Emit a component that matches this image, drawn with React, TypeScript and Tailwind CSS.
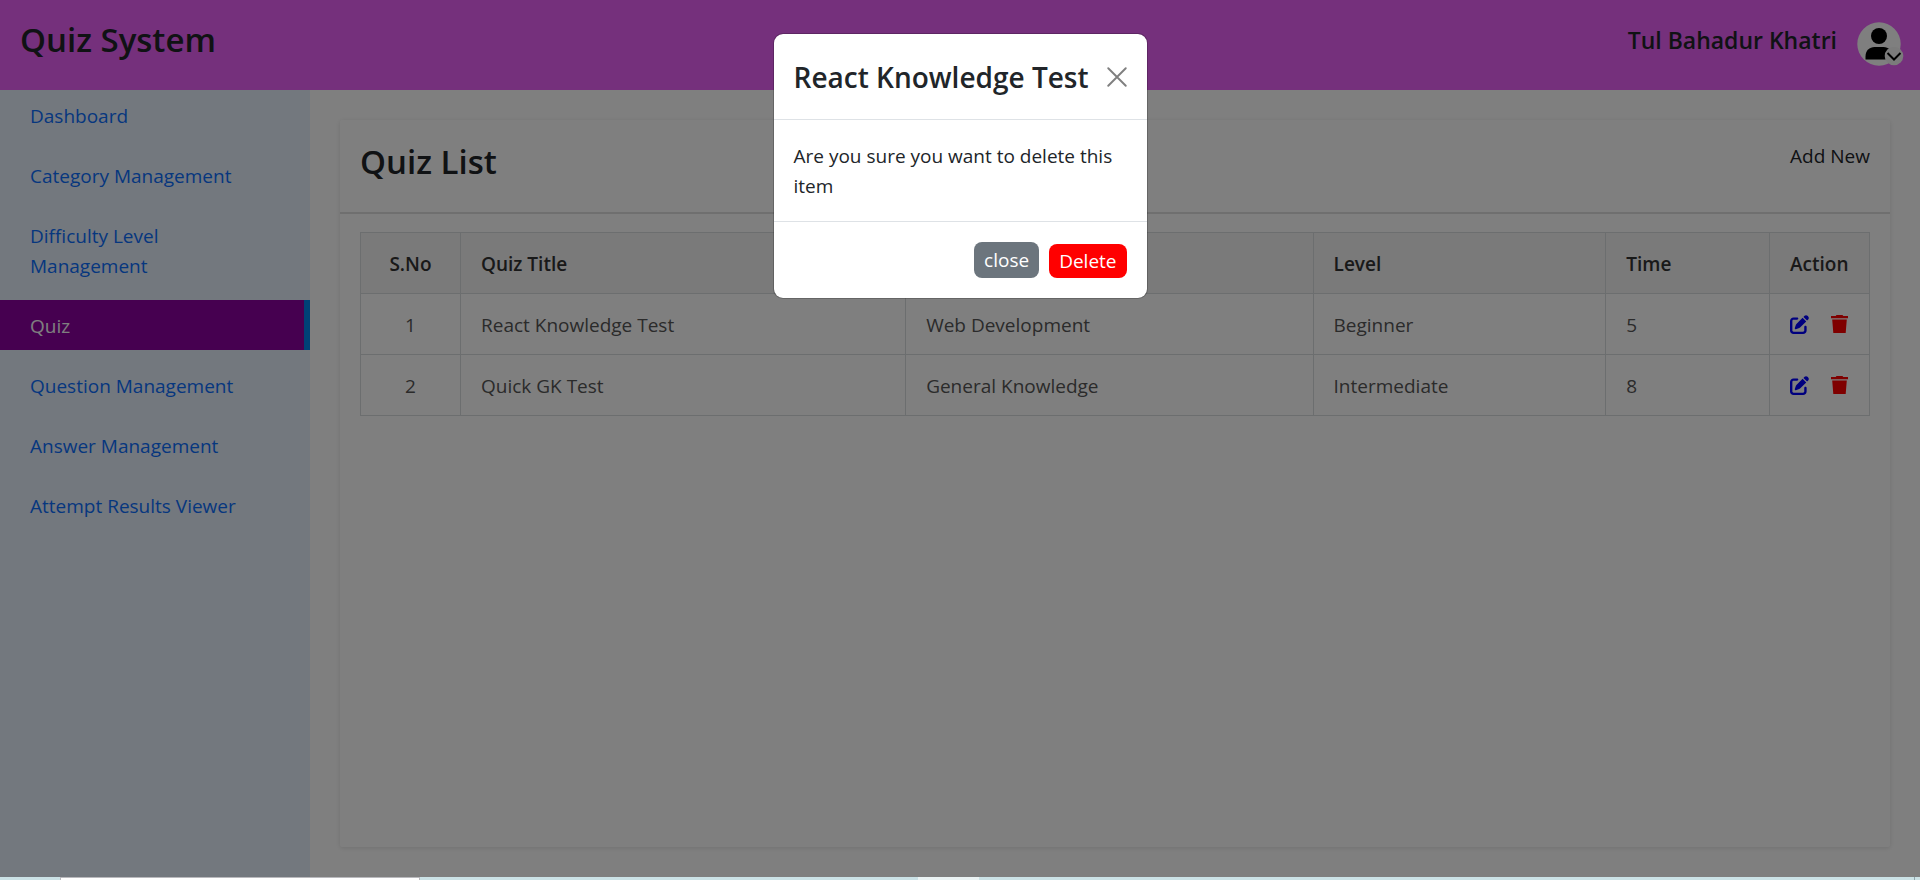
import React from "react";
import { FaPenToSquare } from "react-icons/fa6";

const menu = [
  "Dashboard",
  "Category Management",
  "Difficulty Level Management",
  "Quiz",
  "Question Management",
  "Answer Management",
  "Attempt Results Viewer",
];

const quizzes = [
  { title: "React Knowledge Test", category: "Web Development", level: "Beginner", time: 5 },
  { title: "Quick GK Test", category: "General Knowledge", level: "Intermediate", time: 8 },
];

const cell = "border border-[#d9dcdf] px-5 pt-0.5 h-[61px]";

function TrashIcon() {
  return (
    <svg width="17" height="18" viewBox="0 0 17 18" fill="currentColor">
      <path d="M5.500 0h6l.8 1H17v2.300H0V1h4.700zM1.200 4.500h14.600L14.700 18H2.300z" />
    </svg>
  );
}

function Header() {
  return (
    <header className="flex h-[90px] items-start justify-between bg-[#ea60f8] pl-5 pr-4">
      <h1 className="pt-5 text-[33px] leading-10 font-semibold">Quiz System</h1>
      <div className="flex items-start gap-5 pt-5">
        <h2 className="text-[23px] leading-10 font-semibold">Tul Bahadur Khatri</h2>
        <button type="button" aria-label="Account menu" className="pt-0.5">
          <svg width="47" height="44" viewBox="0 0 47 44">
            <circle cx="22" cy="22" r="21.7" fill="#fff" />
            <circle cx="22" cy="14" r="8" fill="#000" />
            <path d="M8.500 37.500v-3c0-6 4-9.500 9-9.500h9c5 0 9 3.500 9 9.500v3z" fill="#000" />
            <circle cx="37" cy="34" r="9.300" fill="#f6f6f6" />
            <path d="M30.500 31l6.500 6.500 6.500-6.500" fill="none" stroke="#000" strokeWidth="2" />
          </svg>
        </button>
      </div>
    </header>
  );
}

function Sidebar() {
  return (
    <nav className="w-[310px] shrink-0 bg-[#e7f0fd]">
      <ul className="flex flex-col gap-2.5">
        {menu.map((item) => (
          <li key={item}>
            <a
              href="#"
              className={
                item === "Quiz"
                  ? "block border-r-6 border-[#0082ec] bg-[#8c00a0] pt-[11px] pb-[9px] pl-[30px] pr-6 text-white"
                  : "block pt-[11px] pb-[9px] pl-[30px] pr-[60px] text-[#0d6efd]"
              }
            >
              {item}
            </a>
          </li>
        ))}
      </ul>
    </nav>
  );
}

function QuizTable() {
  return (
    <table className="w-full table-fixed border-collapse text-left text-[#565656]">
      <colgroup>
        <col className="w-[100px]" />
        <col className="w-[29.5%]" />
        <col className="w-[27%]" />
        <col className="w-[19.4%]" />
        <col />
        <col className="w-[100px]" />
      </colgroup>
      <thead className="bg-[#f4f4f4] text-[#333]">
        <tr>
          <th className={cell + " text-center font-semibold"}>S.No</th>
          <th className={cell + " font-semibold"}>Quiz Title</th>
          <th className={cell} aria-label="Category" />
          <th className={cell + " font-semibold"}>Level</th>
          <th className={cell + " font-semibold"}>Time</th>
          <th className={cell + " font-semibold"}>Action</th>
        </tr>
      </thead>
      <tbody>
        {quizzes.map((quiz, index) => (
          <tr key={quiz.title}>
            <td className={cell + " text-center"}>{index + 1}</td>
            <td className={cell}>{quiz.title}</td>
            <td className={cell}>{quiz.category}</td>
            <td className={cell}>{quiz.level}</td>
            <td className={cell}>{quiz.time}</td>
            <td className={cell}>
              <div className="flex items-center gap-[22px] pb-0.5">
                <button type="button" aria-label="Edit quiz" className="text-[#0000ff]">
                  <FaPenToSquare className="size-[19px]" />
                </button>
                <button type="button" aria-label="Delete quiz" className="text-[#ff0000]">
                  <TrashIcon />
                </button>
              </div>
            </td>
          </tr>
        ))}
      </tbody>
    </table>
  );
}

function DeleteDialog() {
  return (
    <div
      role="dialog"
      aria-modal="true"
      aria-labelledby="dialog-title"
      className="w-[375px] rounded-[10px] border border-black/20 bg-white bg-clip-padding"
    >
      <div className="flex h-[86px] items-center justify-between border-b border-[#dee2e6] px-5">
        <h2 id="dialog-title" className="whitespace-nowrap text-[28px] leading-9 font-semibold">
          React Knowledge Test
        </h2>
        <button type="button" aria-label="Close dialog">
          <svg width="20" height="20" viewBox="0 0 16 16" fill="none" stroke="#7f7f7f" strokeWidth="1.500" strokeLinecap="round">
            <path d="M1 1l14 14M15 1L1 15" />
          </svg>
        </button>
      </div>
      <p className="border-b border-[#dee2e6] px-5 pt-[21px] pb-5">
        Are you sure you want to delete this item
      </p>
      <div className="flex items-end justify-end gap-2.5 p-5">
        <button type="button" className="h-9 rounded-lg bg-[#6c757d] px-2.5 text-white">close</button>
        <button type="button" className="h-[34px] rounded-lg bg-[#ff0000] px-2.5 text-white">Delete</button>
      </div>
    </div>
  );
}

function DesktopEdge() {
  return (
    <div className="flex h-[3px] bg-[#cbe2e6]">
      <div className="ml-[60px] w-[360px] border-x border-t border-[#b9b9bd] bg-white" />
      <div className="ml-[498px] w-[61px] bg-[#ebf3f4]" />
      <div className="mr-[5px] ml-auto w-px bg-[#8fa5ab]" />
    </div>
  );
}

export default function App() {
  return (
    <div className="flex min-h-screen flex-col font-['Open_Sans','Noto_Sans',sans-serif] text-[19px] leading-[30px] text-[#212529]">
      <div className="relative flex grow flex-col">
        <Header />
        <div className="flex grow">
          <Sidebar />
          <main className="flex grow flex-col p-[30px]">
            <section className="grow rounded-xs shadow-[0_1px_5px_rgba(0,0,0,0.12)]">
              <div className="flex h-[94px] items-start justify-between border-b-2 border-[#dfdfdf] px-5">
                <h2 className="pt-[22px] text-[33px] leading-10 font-semibold">Quiz List</h2>
                <a href="#" className="pt-[21px]">Add New</a>
              </div>
              <div className="px-5 pt-[18px]">
                <QuizTable />
              </div>
            </section>
          </main>
        </div>
        <div className="absolute inset-0 flex items-start justify-center bg-black/50 pt-[33px]">
          <DeleteDialog />
        </div>
      </div>
      <DesktopEdge />
    </div>
  );
}
